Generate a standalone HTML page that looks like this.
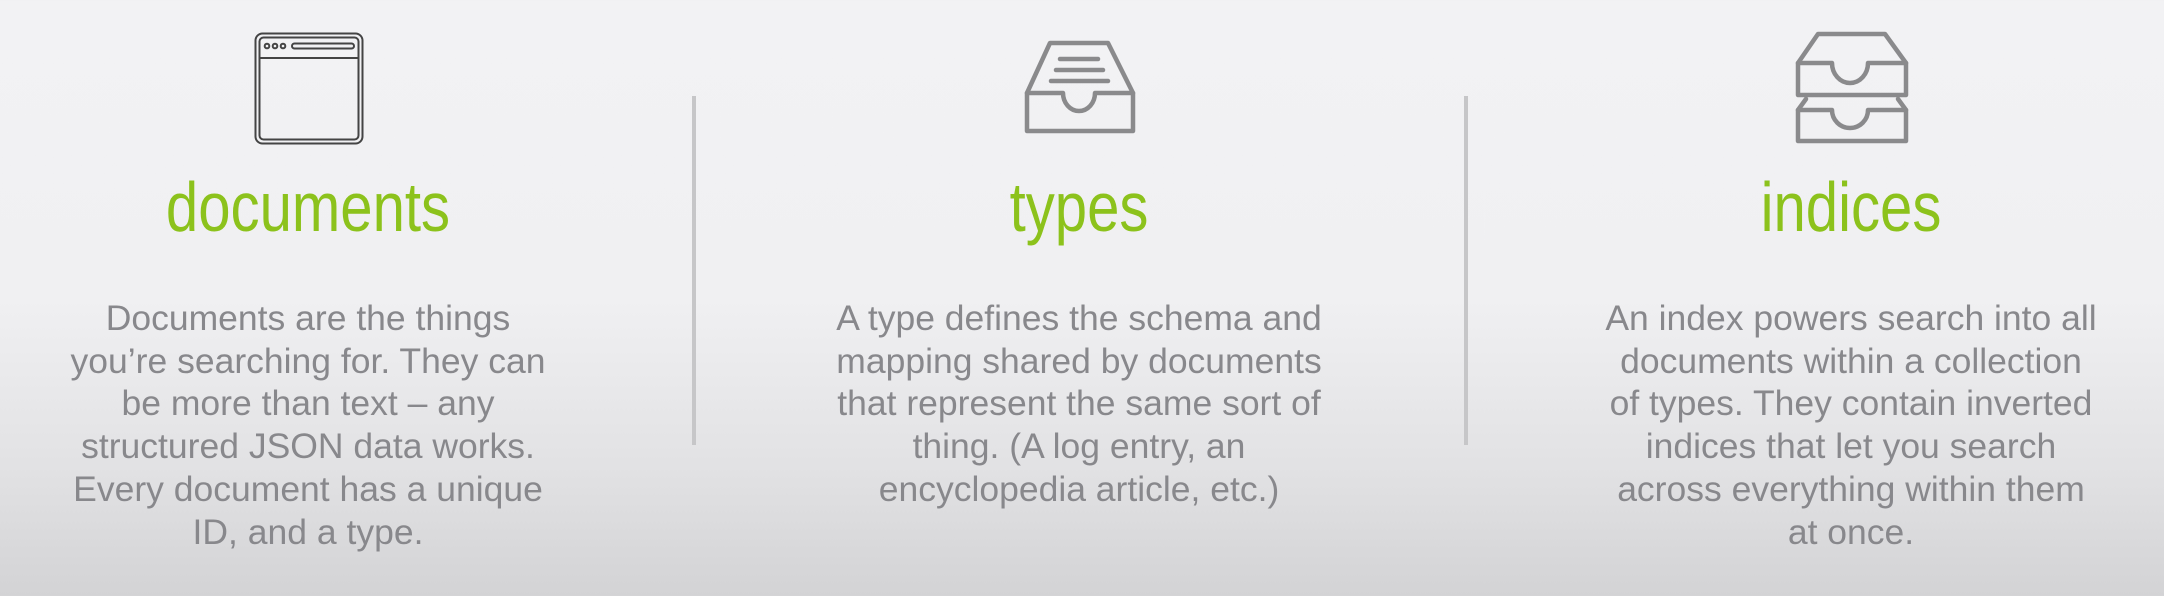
<!DOCTYPE html>
<html><head><meta charset="utf-8"><style>
html,body{margin:0;padding:0}
body{width:2164px;height:596px;overflow:hidden;position:relative;background:linear-gradient(180deg,#f2f2f4 0%,#f0f0f2 50%,#e2e2e4 78%,#d3d3d5 100%);font-family:"Liberation Sans",sans-serif}
.col{position:absolute;width:700px;text-align:center}
.t{position:absolute;left:0;width:700px;top:172px;font-size:70px;line-height:70px;color:#8cc21c;transform:scaleX(0.83)}
.b{position:absolute;left:0;width:700px;top:297px;font-size:35.5px;line-height:42.7px;color:#88888c}
.div{position:absolute;top:96px;width:4px;height:349px;background:#c6c6c8}
</style></head><body>
<div class="div" style="left:692px"></div>
<div class="div" style="left:1464px"></div>

<div class="col" style="left:-42px">
<div class="t">documents</div>
<div class="b">Documents are the things<br>you’re searching for. They can<br>be more than text – any<br>structured JSON data works.<br>Every document has a unique<br>ID, and a type.</div>
</div>
<div class="col" style="left:729px">
<div class="t">types</div>
<div class="b">A type defines the schema and<br>mapping shared by documents<br>that represent the same sort of<br>thing. (A log entry, an<br>encyclopedia article, etc.)</div>
</div>
<div class="col" style="left:1501px">
<div class="t">indices</div>
<div class="b">An index powers search into all<br>documents within a collection<br>of types. They contain inverted<br>indices that let you search<br>across everything within them<br>at once.</div>
</div>

<svg width="2164" height="596" style="position:absolute;left:0;top:0" fill="none" stroke-linecap="round" stroke-linejoin="round">
 <g stroke="#444" stroke-width="2">
  <rect x="255.5" y="33.5" width="107" height="110" rx="7"/>
  <rect x="259.5" y="37.5" width="99" height="102" rx="4"/>
  <line x1="259.5" y1="58" x2="358.5" y2="58"/>
  <circle cx="267" cy="46" r="2.3"/><circle cx="275" cy="46" r="2.3"/><circle cx="283" cy="46" r="2.3"/>
  <rect x="292" y="43.5" width="62" height="5" rx="2.5"/>
 </g>
 <g stroke="#8a8a8c" stroke-width="4.5">
  <path d="M1050 43 H1108 L1133 93 V131 H1027 V93 Z"/>
  <path d="M1027 93 H1063 A16 18 0 0 0 1095 93 H1133"/>
  <line x1="1060" y1="59" x2="1098" y2="59"/>
  <line x1="1056" y1="70" x2="1103" y2="70"/>
  <line x1="1051" y1="81" x2="1108" y2="81"/>
 </g>
 <g stroke="#8a8a8c" stroke-width="4.5">
  <path d="M1818 34 H1885 L1906 63 V95 H1798 V63 Z"/>
  <path d="M1798 63 H1832 A18 20 0 0 0 1868 63 H1906"/>
  <path d="M1806 99 L1798 110 V141 H1906 V110 L1898 99"/>
  <path d="M1798 110 H1832 A18 18 0 0 0 1868 110 H1906"/>
 </g>
</svg>
</body></html>
